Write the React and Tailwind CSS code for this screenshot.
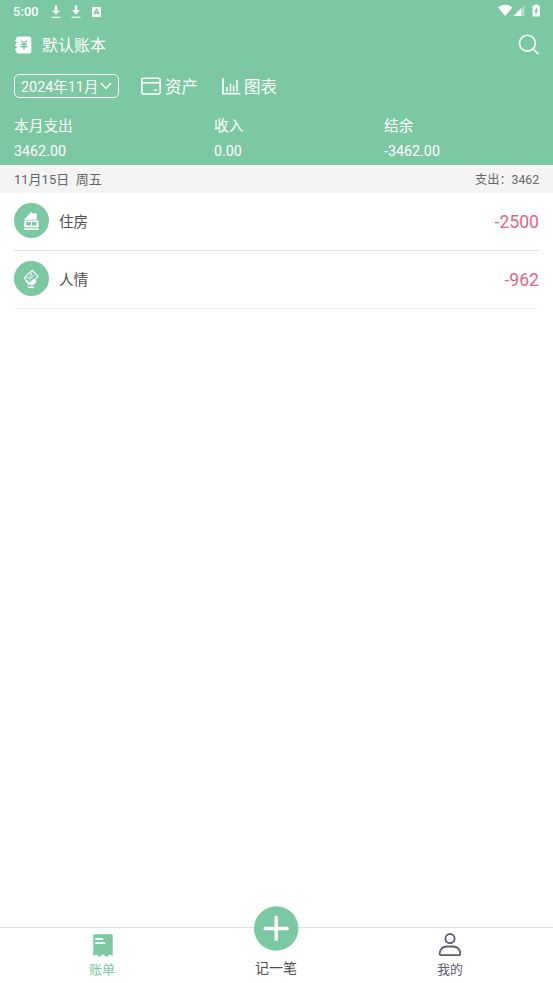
/* ── Data ── */
const SUMMARY = [
  { label: '本月支出', value: '3462.00', width: 'w-[200px]' },
  { label: '收入', value: '0.00', width: 'w-[170px]' },
  { label: '结余', value: '-3462.00', width: 'flex-1' },
];

/* ── Status bar icons ── */
const DownloadIcon = () => (
  <svg width="10" height="14" viewBox="0 0 10 14" fill="#fff">
    <path d="M3.7 0.5h2.6v5h2.6L5 9.6 1.1 5.5h2.6z" />
    <path d="M0.5 11.6h9v1.4h-9z" opacity=".8" />
  </svg>
);

const KeyboardIcon = () => (
  <svg width="9" height="10" viewBox="0 0 9 10">
    <rect width="9" height="10" rx="1" fill="#fff" />
    <path d="M2 7.6 4.5 2.4 7 7.6M3 6h3" fill="none" stroke="#7bc8a2" strokeWidth="1.4" />
  </svg>
);

const SignalIcons = () => (
  <svg width="44" height="14" viewBox="0 0 44 14" fill="#fff">
    <path d="M0 3.4C4-.3 10.4-.3 14.4 3.4L7.2 12z" />
    <path d="M26.5 1v11H15.5z" opacity=".4" />
    <path d="M23.2 4.3V12H15.5z" />
    <path d="M36.7.4h3v1h1.5c.3 0 .6.3.6.6v10c0 .3-.3.6-.6.6h-6c-.3 0-.6-.3-.6-.6V2c0-.3.3-.6.6-.6h1.5z" />
    <path d="M38.9 3v3.1h1.3L37.5 11V7.7h-1.300z" fill="#7bc8a2" />
  </svg>
);

/* ── Header icons ── */
const BookIcon = () => (
  <svg width="17" height="18" viewBox="0 0 17 18">
    <rect x="1.3" y="0.5" width="15" height="17" rx="2.5" fill="#fff" />
    <path d="M0 4.5h3M0 9h3M0 13.5h3" stroke="#fff" strokeWidth="1.3" />
    <path d="M1.3 6.7h1M1.3 11.3h1" stroke="#7bc8a2" strokeWidth="1" />
    <path
      d="M6.3 4.8 9 8.3l2.7-3.5M5.6 8.6h6.8M5.6 10.8h6.8M9 8.3v5.2"
      fill="none"
      stroke="#7bc8a2"
      strokeWidth="1.4"
    />
  </svg>
);

const SearchIcon = () => (
  <svg width="21" height="21" viewBox="0 0 21 21" fill="none" stroke="#fff" strokeWidth="1.6">
    <circle cx="9.4" cy="9.2" r="7.9" />
    <path d="m15 15 4.9 4.7" strokeLinecap="round" />
  </svg>
);

const CardIcon = () => (
  <svg width="20" height="18" viewBox="0 0 20 18" fill="none" stroke="#fff" strokeWidth="1.5">
    <rect x="0.9" y="1.2" width="18.2" height="15.8" rx="1.8" />
    <path d="M1 5.8h18" />
    <path d="M13 13.3h3.2" />
  </svg>
);

const ChartIcon = () => (
  <svg width="19" height="18" viewBox="0 0 19 18" fill="none" stroke="#fff" strokeWidth="1.7">
    <path d="M1 1v15.700h17.300" />
    <path d="M5 10v4.500M8.500 6.500v8M11.600 8.500v6M15 3v11.500" strokeWidth="1.5" />
  </svg>
);

/* ── Category icons ── */
const HouseIcon = () => (
  <svg width="17" height="20" viewBox="0 0 17 20" fill="#fff">
    <path d="M0.9 8.7 8.5 1l2 2V2.2h3.3v6.500z" />
    <path
      fillRule="evenodd"
      d="M1.2 9.4h14.4v6.9H1.2zM3.3 11.100v3.300h4.600v-3.300zM9 11.100v3.300h4.600v-3.300z"
    />
    <path d="M0.9 17.300h15v1.700h-15z" />
  </svg>
);

const GiftIcon = () => (
  <svg width="17" height="20" viewBox="0 0 17 20" fill="none" stroke="#fff" strokeLinecap="round">
    <path d="M4 13 1.3 8.6 9.4 1.4l5.7 6-3.3 3.4" strokeWidth="1.200" />
    <path d="m3.500 8.600 3.700.2L8.800 4.200M6 11.400l5-5.200" strokeWidth=".9" />
    <path
      d="M4.300 12c.7 1.600 2.400 2 3.600 1.200l1.800-2.400c1-.8 1.900 0 1.300 1l1.300-.9c1.200 2-.3 4-2.300 4.600H5.600z"
      fill="#fff"
      strokeWidth="1"
    />
    <path d="m6.500 11.700 1.900-1.700" stroke="#7bc8a2" strokeWidth=".9" />
    <path d="M5 18.200h6.200" strokeWidth="1.6" strokeLinecap="butt" />
  </svg>
);

/* ── Tab bar icons ── */
const BillIcon = () => (
  <svg width="20" height="24" viewBox="0 0 20 24">
    <path
      d="M1.2.3h17.6c.5 0 .9.4.9.9V22c-1.4 0-1.5-1.6-2.8-1.6s-1.5 2.3-3.3 2.3-2-2.3-3.5-2.3-1.8 2.3-3.5 2.3-2-2.3-3.4-2.3c-1.3 0-1.4 1.6-2.9 1.6V1.2c0-.5.4-.9.9-.9z"
      fill="#7bc8a2"
    />
    <path d="M3 5h6.500M3 9.200h8.500" stroke="#fff" strokeWidth="1.8" strokeLinecap="round" />
  </svg>
);

const UserIcon = () => (
  <svg width="24" height="24" viewBox="0 0 24 24" fill="none" stroke="#5e5c73" strokeWidth="1.8">
    <circle cx="12" cy="5.6" r="4.6" />
    <path d="M3 22.2c-1 0-1.500-.7-1.400-1.700C2.200 16 5 13.500 9 13.500h6c4 0 6.800 2.500 7.400 7 .1 1-.4 1.700-1.400 1.700z" />
  </svg>
);

const RECORDS = [
  { name: '住房', amount: '-2500', icon: HouseIcon, line: 'border-[#e2e2e2]' },
  { name: '人情', amount: '-962', icon: GiftIcon, line: 'border-[#f2f2f2]' },
];

/* ── Single record row ── */
const RecordRow = ({ record }) => {
  const Icon = record.icon;
  return (
    <li className={`flex h-[58px] items-center border-b ${record.line}`}>
      <span className="mb-0.5 flex size-[35px] items-center justify-center rounded-full bg-[#7bc8a2]">
        <Icon />
      </span>
      <span className="ml-[10px] flex-1 pt-px text-[14.6px] text-[#505050]">{record.name}</span>
      <span className="pt-[3px] text-[17.6px] text-[#e2667f]">{record.amount}</span>
    </li>
  );
};

/* ══ MAIN PAGE ══ */
const App = () => (
  <div
    lang="zh-CN"
    className="flex h-screen flex-col bg-white font-[Roboto,'Noto_Sans_CJK_SC',sans-serif] leading-none"
  >
    <header className="h-[165px] bg-[#7bc8a2] text-white">
      {/* Status bar */}
      <div className="flex h-[23px] items-center pl-[13px] pr-[11px]">
        <span className="w-[38px] pt-px text-[12.7px] font-medium tracking-[0.2px]">5:00</span>
        <DownloadIcon />
        <span className="ml-[10px]">
          <DownloadIcon />
        </span>
        <span className="ml-[10.5px]">
          <KeyboardIcon />
        </span>
        <span className="-mt-px ml-auto">
          <SignalIcons />
        </span>
      </div>

      {/* Account book */}
      <div className="flex h-[43px] items-center pl-[15px] pr-[14px]">
        <BookIcon />
        <h1 className="ml-[10px] flex-1 pt-0.5 text-[16px]">默认账本</h1>
        <SearchIcon />
      </div>

      {/* Month picker and shortcuts */}
      <div className="flex h-10 items-center pl-[14px]">
        <button className="flex h-6 w-[105px] items-center justify-between rounded-[5px] border-[1.4px] border-white pl-[6px] pr-[6px] text-[14.4px]">
          <span className="whitespace-nowrap pt-[4px]">2024年11月</span>
          <svg width="12" height="8" viewBox="0 0 12 8" fill="none" stroke="#fff" strokeWidth="1.5">
            <path d="m1 1 5 5.500L11 1" />
          </svg>
        </button>
        <a className="ml-[22px] flex w-[81px] items-center gap-1 text-[16.5px]">
          <CardIcon />
          <span className="pt-[4px]">资产</span>
        </a>
        <a className="flex items-center gap-[3px] text-[16.5px]">
          <ChartIcon />
          <span className="pt-[4px]">图表</span>
        </a>
      </div>

      {/* Month totals */}
      <dl className="flex pl-[14px] pt-3">
        {SUMMARY.map((item) => (
          <div key={item.label} className={item.width}>
            <dt className="h-[25px] text-[14.7px] leading-4">{item.label}</dt>
            <dd className="text-[14.3px] leading-4">{item.value}</dd>
          </div>
        ))}
      </dl>
    </header>

    <main className="flex-1">
      <div className="flex h-7 items-center justify-between bg-[#f4f4f4] px-[14px] text-[#666]">
        <span className="whitespace-pre text-[13px]">11月15日  周五</span>
        <span className="pt-0.5 text-[12.2px]">支出：3462</span>
      </div>
      <ul className="mx-[14px]">
        {RECORDS.map((record) => (
          <RecordRow key={record.name} record={record} />
        ))}
      </ul>
    </main>

    {/* Tab bar */}
    <nav className="flex h-14 border-t border-[#e0e0e0] pr-[2px]">
      <a className="flex w-[205px] flex-col items-center pt-[6px] text-[13px] text-[#7bc8a2]">
        <BillIcon />
        <span className="mr-px mt-[5px]">账单</span>
      </a>
      <a className="-mt-[22px] flex w-[143px] flex-col items-center text-[14px] text-[#505050]">
        <svg width="45" height="45" viewBox="0 0 45 45">
          <circle cx="22.2" cy="22.5" r="22.2" fill="#7bc8a2" />
          <path d="M22.200 11.500v22M11.200 22.500h22" stroke="#fff" strokeWidth="3.4" strokeLinecap="round" />
        </svg>
        <span className="mr-px mt-[10px]">记一笔</span>
      </a>
      <a className="flex flex-1 flex-col items-center pt-[5px] text-[12.8px] text-[#5e5c73]">
        <UserIcon />
        <span className="ml-px mt-[7px]">我的</span>
      </a>
    </nav>
  </div>
);

export default App;
